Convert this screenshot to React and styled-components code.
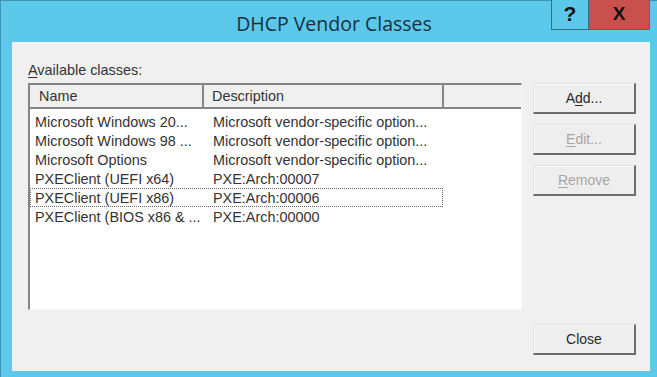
import styled, { createGlobalStyle } from 'styled-components';

const GlobalStyle = createGlobalStyle`
  html, body {
    margin: 0;
    padding: 0;
    width: 657px;
    height: 377px;
    overflow: hidden;
    background: #5cc8ea;
  }
  * {
    box-sizing: border-box;
  }
`;

const Window = styled.div`
  width: 657px;
  height: 377px;
  display: flex;
  flex-direction: column;
  background: #5cc8ea;
  border-top: 1px solid #3f93b3;
  border-left: 1px solid #3f93b3;
  padding: 0 7px 6px 11px;
  font-family: 'Liberation Sans', Arial, sans-serif;
`;

const TitleBar = styled.div`
  height: 41px;
  display: grid;
  grid-template-columns: 1fr auto 1fr;
  align-items: start;
`;

const Title = styled.div`
  grid-column: 2;
  padding-top: 9px;
  padding-left: 6px;
  font-family: 'Open Sans', 'Noto Sans', sans-serif;
  font-size: 19.5px;
  font-weight: 500;
  color: #17323f;
`;

const Captions = styled.div`
  grid-column: 3;
  justify-self: end;
  display: flex;
  margin-top: -1px;
`;

const CaptionButton = styled.div`
  height: 30px;
  width: ${(p) => p.$width}px;
  display: flex;
  align-items: center;
  justify-content: center;
  background: ${(p) => (p.$danger ? '#c9514d' : '#5cc8ea')};
  border: 1px solid ${(p) => (p.$danger ? '#b04540' : '#2f6f88')};
  border-top: none;
  border-left-width: ${(p) => (p.$danger ? 0 : 1)}px;
  font-family: 'Liberation Sans', Arial, sans-serif;
  font-weight: bold;
  font-size: ${(p) => p.$size}px;
  color: #111;
  padding-bottom: 2px;
`;

const Body = styled.div`
  flex: 1;
  background: #f0f0f0;
  display: flex;
  flex-direction: column;
  padding: 20px 14px 16px 16px;
  color: #2a2a2a;
  font-size: 14.4px;
`;

const Main = styled.div`
  display: flex;
  gap: 11px;
`;

const LeftColumn = styled.div`
  flex: 1;
  display: flex;
  flex-direction: column;
`;

const Label = styled.div`
  height: 16px;
  line-height: 16px;
  margin-bottom: 5px;
  color: #333;
`;

const ListView = styled.div`
  height: 227px;
  background: #fff;
  border-style: solid;
  border-width: 2px 1px 1px 2px;
  border-color: #858585 #fafafa #fafafa #858585;
  display: flex;
  flex-direction: column;
`;

const Header = styled.div`
  display: grid;
  grid-template-columns: 174px 240px 1fr;
  height: 24px;
  background: #f0f0f0;
  border-bottom: 2px solid #858585;
`;

const HeaderCell = styled.div`
  display: flex;
  align-items: center;
  padding-left: ${(p) => p.$pad}px;
  border-right: ${(p) => (p.$last ? 'none' : '2px solid #858585')};
  color: #333;
`;

const Rows = styled.div`
  padding-top: 3px;
  display: flex;
  flex-direction: column;
`;

const Row = styled.div`
  display: grid;
  grid-template-columns: 173px 240px;
  width: 413px;
  height: 19px;
  align-items: center;
  border: 1px ${(p) => (p.$focused ? 'dotted #6a6a6a' : 'solid transparent')};
  color: #333;
`;

const Cell = styled.div`
  padding-left: ${(p) => p.$pad}px;
  white-space: nowrap;
  overflow: hidden;
`;

const RightColumn = styled.div`
  width: 103px;
  padding-top: 21px;
  display: flex;
  flex-direction: column;
  gap: 10px;
`;

const Button = styled.div`
  width: 103px;
  height: 31px;
  display: flex;
  align-items: center;
  justify-content: center;
  background: #eeeeee;
  border-style: solid;
  border-width: 1px 2px 2px 1px;
  border-color: #e2e2e2 #6c6c6c #6c6c6c #e2e2e2;
  box-shadow: inset 1px 1px 0 #fafafa;
  color: ${(p) => (p.$disabled ? '#a6a6a6' : '#2a2a2a')};
  font-size: 14px;
`;

const Footer = styled.div`
  margin-top: 14px;
  display: flex;
  justify-content: flex-end;
`;

const Key = styled.span`
  text-decoration: underline;
  text-underline-offset: 2px;
`;

const classes = [
  ['Microsoft Windows 20...', 'Microsoft vendor-specific option...'],
  ['Microsoft Windows 98 ...', 'Microsoft vendor-specific option...'],
  ['Microsoft Options', 'Microsoft vendor-specific option...'],
  ['PXEClient (UEFI x64)', 'PXE:Arch:00007'],
  ['PXEClient (UEFI x86)', 'PXE:Arch:00006'],
  ['PXEClient (BIOS x86 & ...', 'PXE:Arch:00000'],
];

const App = () => {
  return (
    <>
      <GlobalStyle />
      <Window>
        <TitleBar>
          <Title>DHCP Vendor Classes</Title>
          <Captions>
            <CaptionButton $width={38} $size={21}>?</CaptionButton>
            <CaptionButton $width={61} $size={19} $danger>
              X
            </CaptionButton>
          </Captions>
        </TitleBar>
        <Body>
          <Main>
            <LeftColumn>
              <Label>
                <Key>A</Key>vailable classes:
              </Label>
              <ListView>
                <Header>
                  <HeaderCell $pad={9}>Name</HeaderCell>
                  <HeaderCell $pad={8}>Description</HeaderCell>
                  <HeaderCell $last />
                </Header>
                <Rows>
                  {classes.map(([name, desc], i) => (
                    <Row key={name} $focused={i === 4}>
                      <Cell $pad={4}>{name}</Cell>
                      <Cell $pad={9}>{desc}</Cell>
                    </Row>
                  ))}
                </Rows>
              </ListView>
            </LeftColumn>
            <RightColumn>
              <Button>
                A<Key>d</Key>d...
              </Button>
              <Button $disabled>
                <Key>E</Key>dit...
              </Button>
              <Button $disabled>
                <Key>R</Key>emove
              </Button>
            </RightColumn>
          </Main>
          <Footer>
            <Button>Close</Button>
          </Footer>
        </Body>
      </Window>
    </>
  );
};

export default App;
